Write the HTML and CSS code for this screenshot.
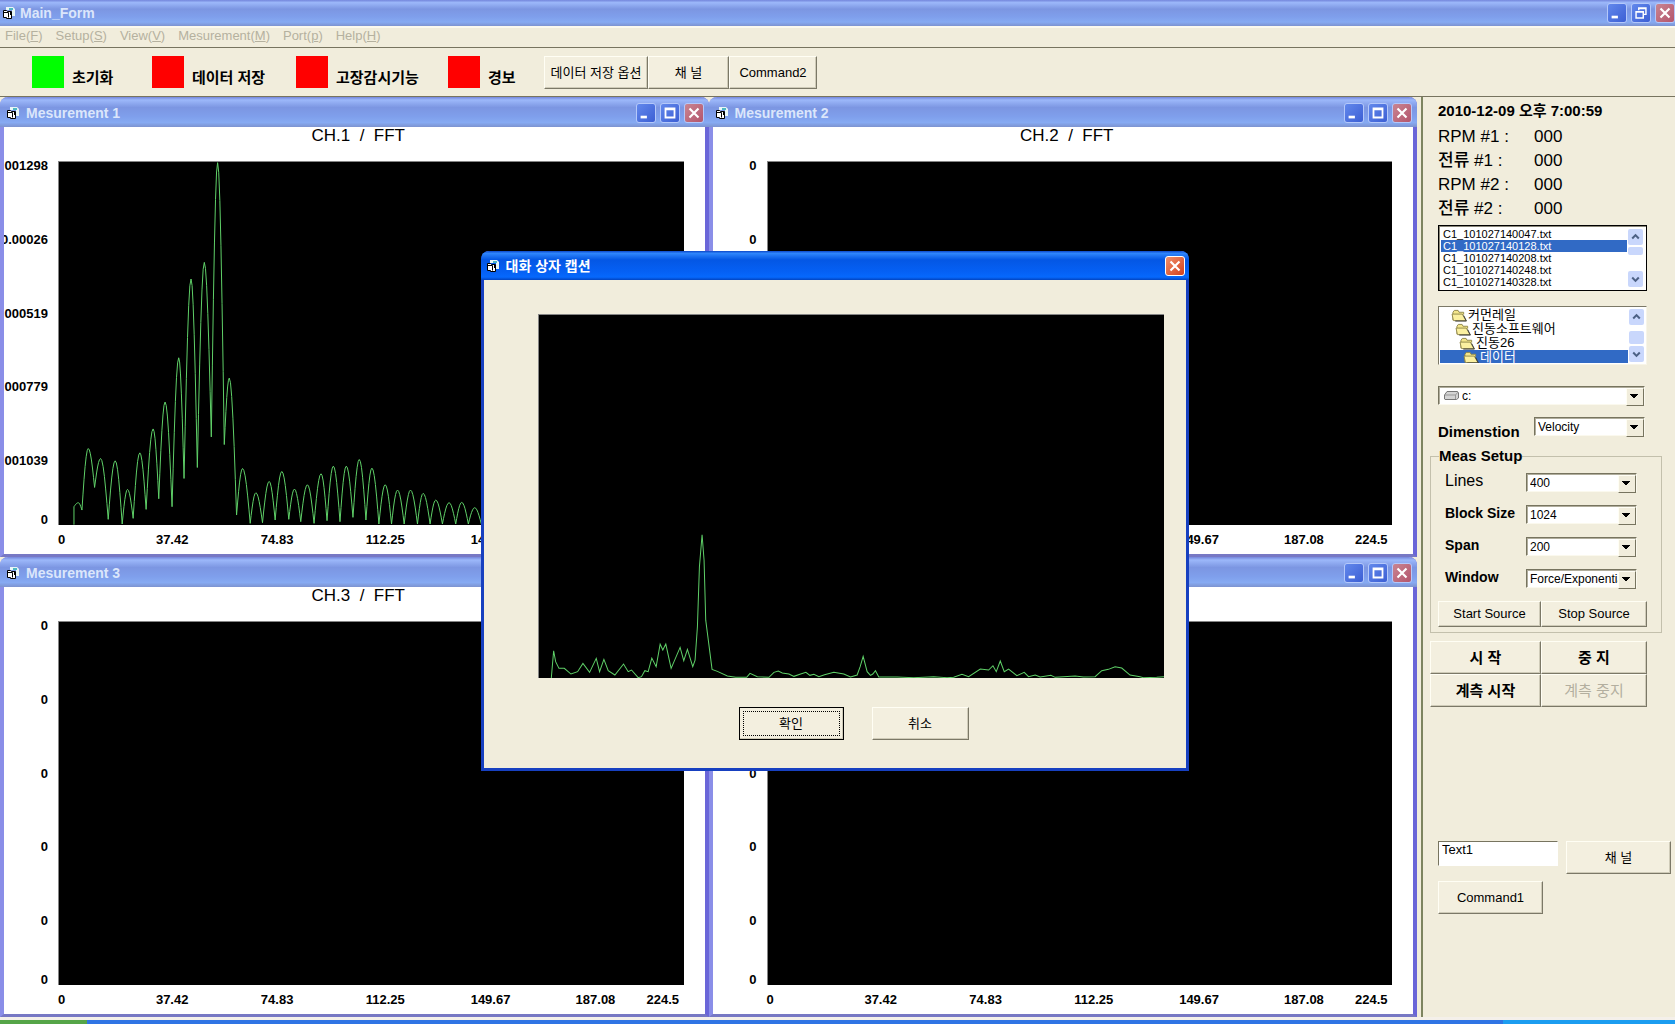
FILE: index.html
```html
<!DOCTYPE html>
<html lang="ko">
<head>
<meta charset="utf-8">
<title>Main_Form</title>
<link rel="stylesheet" href="styles.css">
</head>
<body>
<svg class="defs" aria-hidden="true">
  <symbol id="form-icon" viewBox="0 0 14 14">
    <path d="M4 1h7l2 2v7h-3V4H4z" fill="#e8f6f6"/>
    <path d="M7 2h4v2H7z" fill="#4fb8c4"/>
    <path d="M1.500 4.500h3l1 1h4v7h-5v-1h-3z" fill="#fff" stroke="#000"/>
    <path d="M1.500 6.500h5v5M8.500 6v3" fill="none" stroke="#000"/>
  </symbol>
  <symbol id="min-icon" viewBox="0 0 20 20"><path d="M4 13h7v3H4z" fill="#fff"/></symbol>
  <symbol id="max-icon" viewBox="0 0 20 20"><path d="M4 4h12v12H4zM6 7v7h8V7z" fill="#fff" fill-rule="evenodd"/></symbol>
  <symbol id="restore-icon" viewBox="0 0 20 20"><path d="M7.500 7V4.500h8v7H13M4.500 8.500h8v7h-8zM7 5h9M4 9h9" fill="none" stroke="#fff" stroke-width="1.600"/></symbol>
  <symbol id="close-icon" viewBox="0 0 20 20"><path d="M5 5l10 10M15 5L5 15" stroke="#fff" stroke-width="2.400"/></symbol>
  <symbol id="up-icon" viewBox="0 0 16 16"><path d="M4.500 9.500L8 6l3.500 3.500" fill="none" stroke="#4d6185" stroke-width="2.200"/></symbol>
  <symbol id="down-icon" viewBox="0 0 16 16"><path d="M4.500 6.500L8 10l3.500-3.500" fill="none" stroke="#4d6185" stroke-width="2.200"/></symbol>
  <symbol id="folder-icon" viewBox="0 0 16 14">
    <path d="M1.500 12V3.500l1.500-2h4l1 2h5V6" fill="#f3e58a" stroke="#8f8648"/>
    <path d="M2 12.500L.500 5.500h11l4 7z" fill="#fbf0a0" stroke="#8f8648"/>
    <path d="M4 13h12l-3-6" fill="none" stroke="#333"/>
  </symbol>
</svg>

<header class="titlebar titlebar-main">
  <svg class="form-icon"><use href="#form-icon"/></svg>
  <h1 class="caption">Main_Form</h1>
  <button class="ctl" aria-label="Minimize"><svg><use href="#min-icon"/></svg></button>
  <button class="ctl" aria-label="Restore"><svg><use href="#restore-icon"/></svg></button>
  <button class="ctl ctl-close" aria-label="Close"><svg><use href="#close-icon"/></svg></button>
</header>

<nav class="menubar">
  <a href="#">File(<u>F</u>)</a>
  <a href="#">Setup(<u>S</u>)</a>
  <a href="#">View(<u>V</u>)</a>
  <a href="#">Mesurement(<u>M</u>)</a>
  <a href="#">Port(<u>p</u>)</a>
  <a href="#">Help(<u>H</u>)</a>
</nav>

<div class="toolbar">
  <div class="lamp"><span class="swatch swatch-on"></span>초기화</div>
  <div class="lamp"><span class="swatch"></span>데이터 저장</div>
  <div class="lamp"><span class="swatch"></span>고장감시기능</div>
  <div class="lamp"><span class="swatch"></span>경보</div>
  <button class="btn">데이터 저장 옵션</button>
  <button class="btn">채 널</button>
  <button class="btn">Command2</button>
</div>

<main class="workspace">
  <div class="mdi">
    <section class="window">
      <header class="titlebar">
        <svg class="form-icon"><use href="#form-icon"/></svg>
        <h2 class="caption">Mesurement 1</h2>
        <button class="ctl" aria-label="Minimize"><svg><use href="#min-icon"/></svg></button>
        <button class="ctl" aria-label="Maximize"><svg><use href="#max-icon"/></svg></button>
        <button class="ctl ctl-close" aria-label="Close"><svg><use href="#close-icon"/></svg></button>
      </header>
      <div class="chart">
        <h3 class="chart-title">CH.1  /  FFT</h3>
        <div class="y-axis"><span>001298</span><span>0.00026</span><span>000519</span><span>000779</span><span>001039</span><span>0</span></div>
        <div class="plot"><svg viewBox="174 93 1878 1092" preserveAspectRatio="none"><polyline id="fft-1"/></svg></div>
        <div class="x-axis"><span>0</span><span>37.42</span><span>74.83</span><span>112.25</span><span>149.67</span><span>187.08</span><span>224.5</span></div>
      </div>
    </section>

    <section class="window">
      <header class="titlebar">
        <svg class="form-icon"><use href="#form-icon"/></svg>
        <h2 class="caption">Mesurement 2</h2>
        <button class="ctl" aria-label="Minimize"><svg><use href="#min-icon"/></svg></button>
        <button class="ctl" aria-label="Maximize"><svg><use href="#max-icon"/></svg></button>
        <button class="ctl ctl-close" aria-label="Close"><svg><use href="#close-icon"/></svg></button>
      </header>
      <div class="chart">
        <h3 class="chart-title">CH.2  /  FFT</h3>
        <div class="y-axis"><span>0</span><span>0</span><span>0</span><span>0</span><span>0</span><span>0</span></div>
        <div class="plot"></div>
        <div class="x-axis"><span>0</span><span>37.42</span><span>74.83</span><span>112.25</span><span>149.67</span><span>187.08</span><span>224.5</span></div>
      </div>
    </section>

    <section class="window">
      <header class="titlebar">
        <svg class="form-icon"><use href="#form-icon"/></svg>
        <h2 class="caption">Mesurement 3</h2>
        <button class="ctl" aria-label="Minimize"><svg><use href="#min-icon"/></svg></button>
        <button class="ctl" aria-label="Maximize"><svg><use href="#max-icon"/></svg></button>
        <button class="ctl ctl-close" aria-label="Close"><svg><use href="#close-icon"/></svg></button>
      </header>
      <div class="chart">
        <h3 class="chart-title">CH.3  /  FFT</h3>
        <div class="y-axis"><span>0</span><span>0</span><span>0</span><span>0</span><span>0</span><span>0</span></div>
        <div class="plot"></div>
        <div class="x-axis"><span>0</span><span>37.42</span><span>74.83</span><span>112.25</span><span>149.67</span><span>187.08</span><span>224.5</span></div>
      </div>
    </section>

    <section class="window">
      <header class="titlebar">
        <svg class="form-icon"><use href="#form-icon"/></svg>
        <h2 class="caption"></h2>
        <button class="ctl" aria-label="Minimize"><svg><use href="#min-icon"/></svg></button>
        <button class="ctl" aria-label="Maximize"><svg><use href="#max-icon"/></svg></button>
        <button class="ctl ctl-close" aria-label="Close"><svg><use href="#close-icon"/></svg></button>
      </header>
      <div class="chart">
        <h3 class="chart-title"></h3>
        <div class="y-axis"><span>0</span><span>0</span><span>0</span><span>0</span><span>0</span><span>0</span></div>
        <div class="plot"></div>
        <div class="x-axis"><span>0</span><span>37.42</span><span>74.83</span><span>112.25</span><span>149.67</span><span>187.08</span><span>224.5</span></div>
      </div>
    </section>
  </div>

  <aside class="panel">
    <p class="clock">2010-12-09 오후 7:00:59</p>
    <dl class="readings">
      <dt>RPM #1 :</dt><dd>000</dd>
      <dt>전류 #1 :</dt><dd>000</dd>
      <dt>RPM #2 :</dt><dd>000</dd>
      <dt>전류 #2 :</dt><dd>000</dd>
    </dl>

    <div class="listbox listbox-files">
      <ul role="listbox" aria-label="Files">
        <li role="option">C1_101027140047.txt</li>
        <li role="option" aria-selected="true">C1_101027140128.txt</li>
        <li role="option">C1_101027140208.txt</li>
        <li role="option">C1_101027140248.txt</li>
        <li role="option">C1_101027140328.txt</li>
      </ul>
      <div class="scroll">
        <button aria-label="Scroll up"><svg><use href="#up-icon"/></svg></button>
        <span class="thumb"></span>
        <button class="scroll-down" aria-label="Scroll down"><svg><use href="#down-icon"/></svg></button>
      </div>
    </div>

    <div class="listbox listbox-folders">
      <ul role="listbox" aria-label="Folders">
        <li role="option" class="level-1"><svg class="folder"><use href="#folder-icon"/></svg>커먼레일</li>
        <li role="option" class="level-2"><svg class="folder"><use href="#folder-icon"/></svg>진동소프트웨어</li>
        <li role="option" class="level-3"><svg class="folder"><use href="#folder-icon"/></svg>진동26</li>
        <li role="option" class="level-4" aria-selected="true"><svg class="folder"><use href="#folder-icon"/></svg>데이터</li>
      </ul>
      <div class="scroll scroll-end">
        <button aria-label="Scroll up"><svg><use href="#up-icon"/></svg></button>
        <span class="thumb"></span>
        <button class="scroll-down" aria-label="Scroll down"><svg><use href="#down-icon"/></svg></button>
      </div>
    </div>

    <div class="combo combo-drive">
      <svg class="drive" viewBox="0 0 15 9" aria-hidden="true"><path d="M3 .500h10.500l1 1.500v5l-2 1.500H1L.500 8V4z" fill="#d4d4d4" stroke="#777"/><path d="M1 4h10.500l2.500-3M11.500 4v4" fill="none" stroke="#999"/></svg>
      <select aria-label="Drive"><option>c:</option></select>
    </div>

    <div class="dimension">
      <label for="dimension">Dimenstion</label>
      <div class="combo"><select id="dimension"><option>Velocity</option></select></div>
    </div>

    <fieldset class="setup">
      <legend>Meas Setup</legend>
      <div class="fields">
        <label class="label-light" for="lines">Lines</label>
        <div class="combo"><select id="lines"><option>400</option></select></div>
        <label for="block">Block Size</label>
        <div class="combo"><select id="block"><option>1024</option></select></div>
        <label for="span">Span</label>
        <div class="combo"><select id="span"><option>200</option></select></div>
        <label for="window">Window</label>
        <div class="combo"><select id="window"><option>Force/Exponential</option></select></div>
      </div>
      <div class="source">
        <button class="btn">Start Source</button>
        <button class="btn">Stop Source</button>
      </div>
    </fieldset>

    <div class="run">
      <button class="btn btn-strong">시 작</button>
      <button class="btn btn-strong">중 지</button>
      <button class="btn btn-strong">계측 시작</button>
      <button class="btn btn-strong" disabled>계측 중지</button>
    </div>

    <div class="extra">
      <input class="textbox" type="text" value="Text1" aria-label="Text1">
      <button class="btn">채 널</button>
      <button class="btn">Command1</button>
    </div>
  </aside>
</main>

<footer class="taskbar"><span class="start"></span><span class="tasks"></span><span class="tray"></span></footer>

<section class="dialog" role="dialog" aria-labelledby="dialog-title">
  <header class="titlebar titlebar-active">
    <svg class="form-icon"><use href="#form-icon"/></svg>
    <h2 class="caption" id="dialog-title">대화 상자 캡션</h2>
    <button class="ctl ctl-close" aria-label="Close"><svg><use href="#close-icon"/></svg></button>
  </header>
  <div class="dialog-body">
    <div class="plot"><svg viewBox="174 -558 1878 1092" preserveAspectRatio="none"><polyline points="211,534 218,452 224,485 234,505 250,505 270,522 290,515 306,490 326,517 346,475 356,515 369,478 382,512 402,525 428,492 442,515 452,510 472,533 482,530 492,512 502,515 513,474 526,500 538,432 546,450 555,432 571,505 598,442 609,482 620,448 636,500 643,480 650,380 656,200 664,103 670,180 675,360 684,430 694,508 710,514 740,528 765,532 798,532 808,520 830,530 865,532 880,517 893,513 905,519 925,522 940,529 958,523 976,517 988,526 1000,523 1015,530 1032,524 1060,517 1090,522 1110,531 1130,525 1139,500 1148,469 1160,515 1170,526 1177,522 1185,512 1195,531 1250,531 1300,533 1360,530 1400,533 1420,532 1445,523 1465,530 1500,507 1525,510 1538,497 1548,515 1560,483 1572,515 1585,507 1610,527 1632,517 1645,530 1665,525 1680,531 1712,526 1725,532 1750,530 1785,528 1810,531 1845,530 1865,512 1885,508 1905,500 1925,504 1950,525 1980,530 1990,533 2030,532 2052,530"/></svg></div>
    <div class="dialog-actions">
      <button class="btn btn-default">확인</button>
      <button class="btn">취소</button>
    </div>
  </div>
</section>
<script src="chart.js"></script>
</body>
</html>
```
FILE: chart.js
```js
// Alternating trough and peak coordinates of the channel 1 spectrum.
const lobes = [
  [219,1130],[232,1118],[243,1140],[262,955],[281,1072],[299,985],[322,1168],[343,992],[364,1182],
  [380,1078],[397,1165],[417,968],[436,1138],[457,896],[474,1106],[493,815],[514,1130],[534,682],
  [550,1045],[571,445],[590,1012],[611,395],[632,920],[651,95],[671,943],[686,743],[708,1155],
  [726,1015],[749,1180],[766,1088],[786,1178],[806,1054],[824,1170],[844,1024],[865,1168],
  [882,1077],[901,1175],[921,1064],[941,1180],[962,1031],[980,1172],[999,1008],[1019,1175],
  [1038,1008],[1058,1162],[1077,988],[1097,1170],[1115,1014],[1136,1182],[1155,1064],[1174,1182],
  [1192,1080],[1212,1182],[1231,1080],[1252,1182],[1269,1090],[1290,1182],[1307,1110],[1327,1182],
  [1347,1118],[1367,1182],[1385,1117],[1405,1182],[1424,1133],[1444,1182]
];
const points = ["219,1184"];
for (let i = 1; i < lobes.length; i++) {
  const [x0, y0] = lobes[i - 1];
  const [x1, y1] = lobes[i];
  const rising = i % 2 === 1;
  for (let k = 0; k < 6; k++) {
    const t = k / 6;
    const s = rising ? Math.sin(t * Math.PI / 2) : 1 - Math.cos(t * Math.PI / 2);
    points.push((x0 + (x1 - x0) * t).toFixed(1) + "," + (y0 + (y1 - y0) * s).toFixed(1));
  }
}
points.push(lobes[lobes.length - 1].join(","));
document.getElementById("fft-1").setAttribute("points", points.join(" "));
```
FILE: styles.css
```css
* { box-sizing: border-box; }

body {
  margin: 0;
  min-height: 100vh;
  display: flex;
  flex-direction: column;
  position: relative;
  background: #f1eddc;
  color: #000;
  font: 12px/16px "Liberation Sans", "Noto Sans CJK KR", sans-serif;
}

h1, h2, h3, p, ul, dl, dd { margin: 0; padding: 0; }
button, select, input { font: inherit; color: inherit; margin: 0; }
.defs { display: none; }

/* Title bars */
.titlebar {
  height: 30px;
  flex: none;
  display: flex;
  align-items: center;
  gap: 4px;
  padding: 2px 2px 0 2px;
  background: linear-gradient(#7486dc, #9cb8fa 10%, #7c96e2 35%, #7f9fec 65%, #86aaf2 85%, #7d93d0);
  color: #dbe6fb;
}
.titlebar-main { height: 26px; padding: 0 0 0 2px; }
.form-icon { width: 14px; height: 14px; flex: none; }
.caption { flex: 1; font-size: 14px; line-height: 20px; font-weight: bold; }
.window .caption, .dialog .caption { padding-left: 2px; }

.ctl {
  width: 20px;
  height: 20px;
  padding: 0;
  border: 1px solid #b4c8fa;
  border-radius: 3px;
  background: linear-gradient(135deg, #6288ec, #3c5fd4);
}
.ctl-close { background: linear-gradient(135deg, #c98592, #b4556c); }
.ctl svg { display: block; width: 18px; height: 18px; }

/* Menu and toolbar */
.menubar {
  height: 22px;
  flex: none;
  display: flex;
  gap: 13px;
  padding: 0 5px;
  border-top: 2px solid #fbf9ee;
  border-bottom: 1px solid #77745f;
  font-size: 13px;
}
.menubar a { color: #b5b19f; text-decoration: none; }

.toolbar {
  height: 49px;
  flex: none;
  display: grid;
  grid-template-columns: 120px 144px 152px 96px 104px 81px 88px;
  padding: 8px 0 7px 32px;
  border-bottom: 1px solid #77745f;
}
.lamp {
  display: flex;
  align-items: flex-end;
  gap: 8px;
  height: 32px;
  font-size: 15px;
  line-height: 20px;
  font-weight: bold;
  white-space: nowrap;
}
.swatch { width: 32px; height: 32px; background: #f00; }
.swatch-on { background: #0f0; }

.btn {
  padding: 0;
  border: 1px solid;
  border-color: #fffef4 #7b7867 #7b7867 #fffef4;
  background: #f3efdf;
  box-shadow: inset -1px -1px #cfcbb8;
  font-size: 13px;
  white-space: nowrap;
}
.btn-strong { font-size: 15px; font-weight: bold; }
.btn:disabled { color: #b3af9f; font-weight: normal; }

/* Workspace */
.workspace {
  flex: 1;
  display: grid;
  grid-template-columns: minmax(0, 1fr) 254px;
}
.mdi {
  display: grid;
  grid-template-columns: 1fr 1fr;
  grid-template-rows: 1fr 1fr;
  padding-right: 4px;
}
.window {
  display: flex;
  flex-direction: column;
  min-width: 0;
  border: solid;
  border-width: 0 4px 3px 4px;
  border-color: #6a66d8 #6a66d8 #7778c4 #8a8ee8;
  border-radius: 8px 8px 0 0;
  background: #fff;
}
.window .titlebar { margin: 0 -4px; padding: 2px 5px 0 6px; border-radius: 8px 8px 0 0; }

.chart {
  flex: 1;
  display: grid;
  grid-template-columns: 44px minmax(0, 1fr);
  grid-template-rows: 34px minmax(0, 1fr) 29px;
  column-gap: 10px;
  padding-right: 21px;
}
.chart-title {
  grid-column: 1 / -1;
  padding-left: 29px;
  text-align: center;
  font-size: 17px;
  line-height: 18px;
  font-weight: normal;
  white-space: pre;
}
.y-axis {
  grid-column: 1;
  display: grid;
  grid-template-columns: minmax(0, 1fr);
  grid-template-rows: repeat(5, 1fr);
  margin: -3px 0 -2px;
  overflow: hidden;
}
.y-axis span {
  grid-column: 1;
  display: flex;
  justify-content: flex-end;
}
.y-axis span:nth-child(5) { grid-row: 5; }
.y-axis span:last-child { grid-row: 5; align-self: end; }
.y-axis, .x-axis { font-size: 13px; line-height: 15px; font-weight: bold; }
.x-axis {
  grid-column: 2;
  display: grid;
  grid-template-columns: 98fr 105fr 105fr 105fr 105fr 71fr 37fr;
  padding-top: 7px;
}
.plot {
  background: #000;
  border: solid #858585;
  border-width: 1px 0 0 1px;
  min-height: 0;
  position: relative;
}
.plot svg { position: absolute; inset: 0; width: 100%; height: 100%; }
.plot polyline { fill: none; stroke: #5fd068; stroke-width: 1px; vector-effect: non-scaling-stroke; }

/* Side panel */
.panel {
  border-left: 2px solid #7d8460;
  padding: 2px 4px 8px 15px;
}
.clock { font-size: 15px; line-height: 24px; font-weight: bold; }
.readings {
  display: grid;
  grid-template-columns: 96px 1fr;
  margin: 2px 0 4px;
  font-size: 17px;
  line-height: 24px;
  font-weight: 500;
}

.listbox {
  width: 209px;
  display: flex;
  background: #fff;
  border: 1px solid;
}
.listbox ul { flex: 1; list-style: none; overflow: hidden; }
.listbox li { display: flex; align-items: center; white-space: nowrap; }
.listbox [aria-selected="true"] { background: #316ac5; color: #fff; }
.listbox-files { height: 66px; padding: 2px; border-color: #000; box-shadow: inset 1px 1px #8a8778; }
.listbox-files li { font-size: 11px; line-height: 12px; padding-left: 2px; }
.listbox-folders { height: 59px; margin-top: 15px; padding: 1px; border-color: #7b7867 #f8f5e8 #f8f5e8 #7b7867; }
.listbox-folders li { height: 14px; gap: 1px; font-size: 13px; line-height: 14px; }
.folder { width: 16px; height: 13px; flex: none; }
.level-1 { padding-left: 11px; }
.level-2 { padding-left: 15px; }
.level-3 { padding-left: 19px; }
.level-4 { padding-left: 23px; }

.scroll { width: 17px; display: flex; flex-direction: column; gap: 2px; padding: 1px; }
.scroll button { height: 16px; padding: 0; border: 0; border-radius: 2px; background: #c9d7fc; }
.scroll svg { display: block; width: 15px; height: 16px; }
.thumb { height: 8px; border-radius: 2px; background: #c9d7fc; }
.scroll-down { margin-top: auto; }
.scroll-end .thumb { height: 13px; margin-top: auto; }
.scroll-end .scroll-down { margin-top: 0; }

.combo { position: relative; height: 19px; }
.combo select {
  appearance: none;
  display: block;
  width: 100%;
  height: 19px;
  padding: 0 18px 0 3px;
  border: 1px solid;
  border-color: #77745f #fbf9ee #fbf9ee #77745f;
  border-radius: 0;
  background: #fff;
  box-shadow: inset 1px 1px #b0ad9c;
  font-size: 12px;
  line-height: 14px;
  font-weight: normal;
}
.combo::after {
  content: "";
  position: absolute;
  top: 2px;
  right: 1px;
  width: 16px;
  height: 16px;
  border: 1px solid;
  border-color: #fffef4 #77745f #77745f #fffef4;
  background: linear-gradient(#000, #000) 3px 5px / 8px 1px no-repeat,
    linear-gradient(#000, #000) 4px 6px / 6px 1px no-repeat,
    linear-gradient(#000, #000) 5px 7px / 4px 1px no-repeat,
    linear-gradient(#000, #000) 6px 8px / 2px 1px no-repeat, #f1eddc;
  pointer-events: none;
}
.combo-drive { width: 207px; margin-top: 21px; }
.combo-drive select { padding-left: 23px; }
.drive { position: absolute; left: 6px; top: 5px; width: 15px; height: 9px; }

.dimension {
  width: 207px;
  display: grid;
  grid-template-columns: 96px 1fr;
  margin-top: 12px;
  font-size: 15px;
  line-height: 19px;
  font-weight: bold;
}
.dimension label { padding-top: 5px; }

.setup {
  width: 232px;
  margin: 7px 0 0 -8px;
  padding: 9px 14px 5px 7px;
  border: 1px solid #c3c0ac;
}
.setup legend { margin-left: 1px; padding: 0; font-size: 15px; line-height: 16px; font-weight: bold; }
.fields {
  display: grid;
  grid-template-columns: 81px 111px;
  grid-auto-rows: 32px;
  padding-left: 7px;
  font-size: 14px;
  line-height: 16px;
  font-weight: bold;
}
.label-light { font-size: 16px; font-weight: 500; }
.source { display: grid; grid-template-columns: 103px 106px; height: 26px; }

.run {
  display: grid;
  grid-template-columns: 111px 106px;
  grid-auto-rows: 33px;
  margin: 8px 0 0 -8px;
}
.extra {
  display: grid;
  grid-template-columns: 105px 15px 105px;
  grid-template-rows: 33px 33px;
  gap: 7px 4px;
  margin-top: 134px;
}
.textbox {
  grid-column: 1 / 3;
  width: 120px;
  height: 25px;
  padding: 0 3px 8px;
  border: 1px solid;
  border-color: #77745f #fff #fff #77745f;
  background: #fff;
  font-size: 13px;
}

/* Taskbar edge */
.taskbar {
  height: 7px;
  flex: none;
  display: flex;
  border-top: 3px solid #f4f0ea;
}
.start { width: 87px; background: #55a548; }
.tasks { flex: 1; background: #2f74e4; }
.tray { width: 172px; background: #1c9df0; }

/* Dialog */
.dialog {
  position: absolute;
  left: calc(50% - 357px);
  top: calc(50% - 261px);
  width: 708px;
  border: solid #1740c0;
  border-width: 0 3px 3px 3px;
  border-radius: 8px 8px 0 0;
  background: #f1eddc;
}
.titlebar-active {
  height: 29px;
  margin: 0 -3px;
  padding: 0 4px 0 5px;
  border-radius: 8px 8px 0 0;
  background: linear-gradient(#0b46c8, #2f86fc 8%, #0457e4 30%, #0560f4 70%, #0668fc 90%, #0244c0);
  color: #fff;
}
.titlebar-active .caption { font-size: 14px; }
.titlebar-active .ctl { border-color: #fff; background: linear-gradient(135deg, #f0906c, #d4401c); }
.dialog-body { padding: 34px 22px 28px 54px; }
.dialog-body .plot { height: 364px; }
.dialog-actions {
  display: grid;
  grid-template-columns: 105px 97px;
  grid-auto-rows: 33px;
  column-gap: 28px;
  margin: 29px 0 0 201px;
}
.btn-default { border-color: #000; outline: 1px dotted #000; outline-offset: -5px; }
```
